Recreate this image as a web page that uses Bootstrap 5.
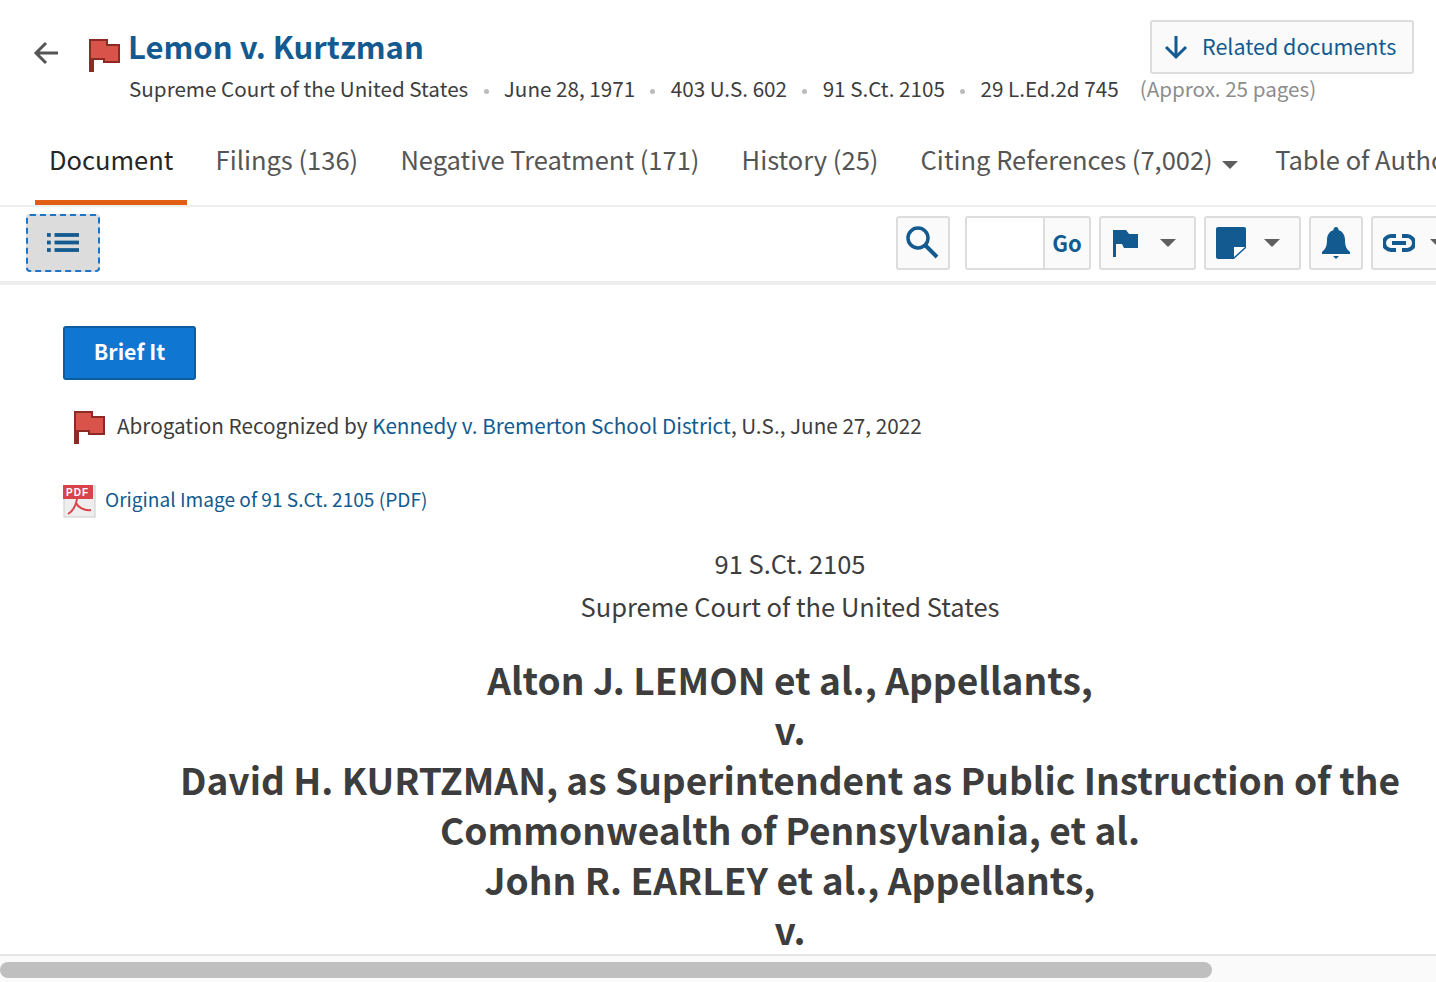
<!doctype html>
<html lang="en"><head><meta charset="utf-8">
<link href="https://cdn.jsdelivr.net/npm/bootstrap@5.3.0/dist/css/bootstrap.min.css" rel="stylesheet">
<style>
html,body{height:982px;overflow:hidden}
body{font-family:"Noto Sans CJK SC","Noto Sans CJK JP","Liberation Sans",sans-serif;color:#3d3d3d;background:#fff;width:1436px}
.shell{height:982px;overflow:hidden;position:relative}
.topband{height:123px;padding:20px 22px 0 33px}
.head-left{flex:1 1 0;min-width:0}
.arrow-ic{margin-top:20px;margin-right:29px;flex:none}
.flag-ic{margin-top:18px;flex:none}
.doc-title{font-size:31px;line-height:44px;font-weight:600;color:#125a8f;margin:4px 0 0 5px;white-space:nowrap}
.meta-line{font-size:20.65px;line-height:30px;white-space:nowrap;margin:5px 0 0 6px;color:#3d3d3d}
.dot{display:inline-block;width:5px;height:5px;border-radius:50%;background:#bbb;margin:0 15.300px;vertical-align:3px}
.approx{color:#8d8d8d;margin-left:21px}
.rel-btn{border:2px solid #ddd;border-radius:3px;color:#125a8f;background:#fafafa;font-size:21.5px;line-height:30px;height:54px;width:264px;padding:0 0 0 10px;white-space:nowrap;flex:none}
.rel-label{margin-bottom:2px}
.tabs{height:84px;border-bottom:2px solid #eee;padding-left:35px;overflow:hidden;flex-wrap:nowrap}
.tabitem{font-size:25.5px;line-height:36px;padding:18px 14px 0;margin-right:14.200px;color:#555;white-space:nowrap;height:82px;border-bottom:5px solid transparent;flex:none}
.tabitem.on{color:#262626;border-bottom-color:#e05e12}
.tabitem.tight{margin-right:9.500px}
.caret-x{display:inline-block;border-left:8px solid transparent;border-right:8px solid transparent;border-top:8px solid #5e5e5e;vertical-align:middle}
.tab-caret{margin-left:9px;margin-top:3px}
.toolrow{height:78px;border-bottom:4px solid #eee;padding:7px 0 0 26px;overflow:hidden}
.listbtn{width:74px;height:58px;border:2px dashed #1b74c4;border-radius:4px;background:#dcdcdc;padding:0;flex:none}
.list-ic{margin-bottom:1px}
.tools{margin-top:2px;width:540px;overflow:hidden}
.tbtn{height:54px;border:2px solid #ddd;border-radius:3px;background:#fafafa;flex:none;padding:0}
.w-search{width:54px;margin-right:15px}
.search-ic{margin:0 2px 2px 0}
.w-go{width:126px;margin-right:8px;overflow:hidden}
.go-input{width:78px;background:#fff;border-right:2px solid #ddd;height:100%}
.go-label{flex:1;color:#125a8f;font-weight:700;font-size:22px;line-height:1;text-align:center;padding-bottom:3px}
.w-drop{width:97px;margin-right:8px}
.w-bell{width:54px;margin-right:8px}
.w-link{width:80px;margin-right:-15px}
.ic-flag{margin-left:11px}
.ic-note{margin-left:9px}
.ic-link{margin-left:10px}
.cg-flag{margin-left:20px}
.cg-note{margin-left:17px}
.cg-link{margin-left:15px}
.body-area{padding:41px 0 0 63px}
.brief-btn{background:#0f76d2;border:2px solid #0d5c9e;color:#fff;font-weight:600;font-size:21.3px;line-height:1;height:54px;width:133px;border-radius:3px;padding:0 0 4px}
.flagline{font-size:20.7px;line-height:32px;margin-top:28px;margin-left:10px;white-space:nowrap}
.flag-small{margin:2px 9px 0 0;flex:none}
.flag-text{margin-top:1px}
.flagline a,.pdfline a{color:#125a8f;text-decoration:none}
.pdfline{font-size:19.1px;line-height:30px;margin-top:36px;white-space:nowrap}
.pdf-ic{margin:2px 1px 0 -1px;flex:none}
.pdf-text{margin-top:2px}
.cite{font-size:25.5px;line-height:43px;text-align:center;width:1300px;margin:23px 0 0 77px}
.parties{font-size:37.1px;line-height:50px;font-weight:600;text-align:center;width:1300px;margin:27px 0 0 77px;color:#3d3d3d}
.hbar{height:28px;background:#fafafa;border-top:2px solid #e6e6e6;position:absolute;left:0;right:0;bottom:0}
.hthumb{height:16px;width:1212px;background:#bfbfbf;border-radius:8px;margin-top:6px}
.pdf-label{font:700 10px "Liberation Sans",sans-serif;fill:#fff;letter-spacing:1px}
</style></head><body>
<div class="shell">
 <div class="topband d-flex justify-content-between align-items-start">
  <div class="head-left d-flex align-items-start">
   <svg class="arrow-ic" width="26" height="26" viewBox="0 0 26 26" fill="none" stroke="#555" stroke-width="3"><path d="M25 13H3M13 3 3 13l10 10"/></svg>
   <svg class="flag-ic" width="35" height="36" viewBox="0 0 35 36"><path fill="#d9534a" stroke="#8e2a24" stroke-width="2" d="M2 2h17v5h12v17H16v-3H5v12H2z"/><rect x="1" y="20" width="4" height="14" fill="#8e2a24"/></svg>
   <div>
    <h1 class="doc-title">Lemon v. Kurtzman</h1>
    <div class="meta-line">Supreme Court of the United States<span class="dot"></span>June 28, 1971<span class="dot"></span>403 U.S. 602<span class="dot"></span>91 S.Ct. 2105<span class="dot"></span>29 L.Ed.2d 745<span class="approx">(Approx. 25 pages)</span></div>
   </div>
  </div>
  <button class="rel-btn d-flex align-items-center gap-2" type="button"><svg width="28" height="28" viewBox="0 0 28 28" fill="none" stroke="#125a8f" stroke-width="3"><path d="M14 3v21M4 14l10 10 10-10"/></svg><span class="ms-1 rel-label">Related documents</span></button>
 </div>
 <div class="tabs d-flex">
  <div class="tabitem on">Document</div><div class="tabitem">Filings (136)</div><div class="tabitem">Negative Treatment (171)</div><div class="tabitem">History (25)</div><div class="tabitem tight">Citing References (7,002)<span class="caret-x tab-caret"></span></div><div class="tabitem">Table of Authorities</div>
 </div>
 <div class="toolrow d-flex justify-content-between">
  <button class="listbtn d-flex align-items-center justify-content-center" type="button" aria-label="Table of contents"><svg class="list-ic" width="32" height="21" viewBox="0 0 34 22" fill="#125a8f"><rect x="0" y="1" width="4" height="4"/><rect x="8" y="1" width="26" height="4"/><rect x="0" y="9" width="4" height="4"/><rect x="8" y="9" width="26" height="4"/><rect x="0" y="17" width="4" height="4"/><rect x="8" y="17" width="26" height="4"/></svg></button>
  <div class="tools d-flex">
   <button class="tbtn w-search d-flex align-items-center justify-content-center" type="button" aria-label="Search"><svg class="search-ic" width="34" height="34" viewBox="0 0 34 34" fill="none" stroke="#125a8f"><circle cx="13" cy="13" r="10" stroke-width="3.500"/><path d="M20 20l12 12" stroke-width="4"/></svg></button>
   <div class="tbtn w-go d-flex align-items-center"><div class="go-input"></div><div class="go-label">Go</div></div>
   <button class="tbtn w-drop d-flex align-items-center" type="button" aria-label="Flag"><svg class="ic-flag" width="28" height="30" viewBox="0 0 28 30" fill="#125a8f"><path d="M1 2h13l3 4h9v14H12l-2-4H4v13H1z"/></svg><span class="caret-x cg-flag"></span></button>
   <button class="tbtn w-drop d-flex align-items-center" type="button" aria-label="Note"><svg class="ic-note" width="32" height="34" viewBox="0 0 32 34" fill="#125a8f"><path d="M3 1h26a2 2 0 0 1 2 2v19L19 33H3a2 2 0 0 1-2-2V3a2 2 0 0 1 2-2z"/><path fill="#fff" d="M19 31V21h11z"/></svg><span class="caret-x cg-note"></span></button>
   <button class="tbtn w-bell d-flex align-items-center justify-content-center" type="button" aria-label="Alert"><svg width="30" height="34" viewBox="0 0 30 34" fill="#125a8f"><path d="M15 1a2.500 2.500 0 0 1 2.500 3C22 5.500 24 9.500 24 14c0 6 1.500 9 5 12v2H1v-2c3.500-3 5-6 5-12 0-4.500 2-8.500 6.500-10A2.500 2.500 0 0 1 15 1z"/><path d="M12 30h6l-3 3z"/></svg></button>
   <button class="tbtn w-link d-flex align-items-center" type="button" aria-label="Link"><svg class="ic-link" width="32" height="18" viewBox="0 0 32 18" fill="none" stroke="#125a8f" stroke-width="4"><path d="M13 2H8a7 7 0 0 0 0 14h5M19 2h5a7 7 0 0 1 0 14h-5M9 9h14"/></svg><span class="caret-x cg-link"></span></button>
  </div>
 </div>
 <div class="body-area">
  <button class="brief-btn" type="button">Brief It</button>
  <div class="flagline d-flex align-items-start"><svg class="flag-small" width="35" height="36" viewBox="0 0 35 36"><path fill="#d9534a" stroke="#8e2a24" stroke-width="2" d="M2 2h17v5h12v17H16v-3H5v12H2z"/><rect x="1" y="20" width="4" height="14" fill="#8e2a24"/></svg><span class="flag-text">Abrogation Recognized by <a href="#">Kennedy v. Bremerton School District</a>, U.S., June 27, 2022</span></div>
  <div class="pdfline d-flex align-items-start gap-2"><svg class="pdf-ic" width="34" height="34" viewBox="0 0 34 34"><rect x="2" y="2" width="31" height="31" fill="#eee" stroke="#ccc"/><rect x="1" y="1" width="30" height="14" fill="#d9444a"/><text x="4" y="12" class="pdf-label">PDF</text><path d="M6 30c5-3 8-9 9-15M14 19c2 4 8 8 15 7" fill="none" stroke="#d9444a" stroke-width="2"/></svg><a class="pdf-text" href="#">Original Image of 91 S.Ct. 2105 (PDF)</a></div>
  <div class="cite">91 S.Ct. 2105<br>Supreme Court of the United States</div>
  <div class="parties">Alton J. LEMON et al., Appellants,<br>v.<br>David H. KURTZMAN, as Superintendent as Public Instruction of the Commonwealth of Pennsylvania, et al.<br>John R. EARLEY et al., Appellants,<br>v.</div>
 </div>
 <div class="hbar"><div class="hthumb"></div></div>
</div>
</body></html>
